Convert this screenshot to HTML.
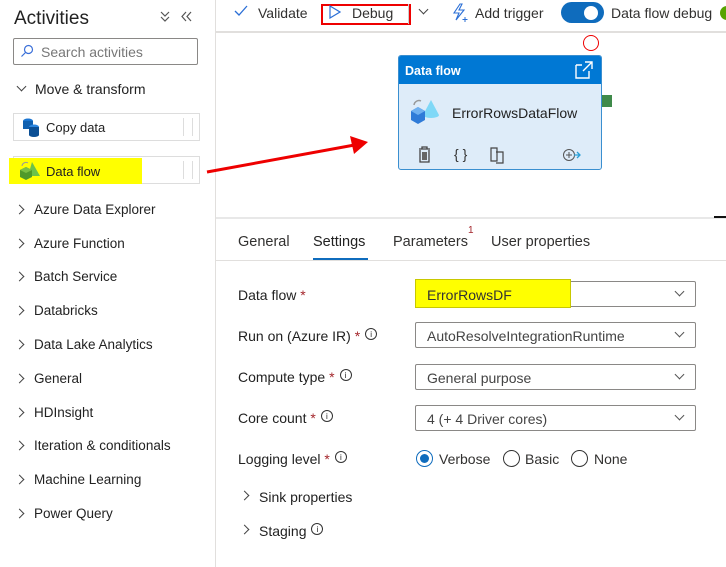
<!DOCTYPE html>
<html><head><meta charset="utf-8"><style>
*{box-sizing:border-box;margin:0;padding:0}
body{width:726px;height:567px;overflow:hidden;background:#fff;font-family:"Liberation Sans",sans-serif;color:#323130;position:relative;font-size:14px}
.a{position:absolute;white-space:nowrap}
.chev{position:absolute;width:7px;height:7px;border-right:1.3px solid #444;border-bottom:1.3px solid #444}
.r{transform:rotate(-45deg)}
.d{transform:rotate(45deg)}
.box{position:absolute;left:415px;width:281px;height:26px;border:1px solid #8a8886;border-radius:2px;font-size:14px;color:#444;padding:5px 0 0 11px}
.box .chev{right:12px;top:6px;transform:rotate(45deg);border-color:#555;width:7px;height:7px}
.info{display:inline-block;width:12px;height:12px;border:1px solid #333;border-radius:50%;font-size:8px;text-align:center;line-height:11px;vertical-align:4px;margin-left:5px}
.lbl{font-size:14px;color:#222}
.star{color:#a4262c}
.rad{position:absolute;width:17px;height:17px;border:1.3px solid #333;border-radius:50%}
</style></head><body>
<!-- sidebar -->
<div class="a" style="left:14px;top:8px;font-size:19px;color:#222">Activities</div>
<svg class="a" style="left:160px;top:10px" width="36" height="14"><path d="M1 2 L5 6 L9 2 M1 7 L5 11 L9 7" stroke="#555" fill="none" stroke-width="1.2"/><path d="M26 2 L22 6.5 L26 11 M31 2 L27 6.5 L31 11" stroke="#555" fill="none" stroke-width="1.2"/></svg>
<div class="a" style="left:13px;top:38px;width:185px;height:27px;border:1px solid #8a8886;border-radius:2px"></div>
<svg class="a" style="left:20px;top:44px" width="14" height="14"><circle cx="8.5" cy="5.5" r="4" fill="none" stroke="#3a6fd8" stroke-width="1.2"/><path d="M5.5 8.5 L1.5 12.5" stroke="#3a6fd8" stroke-width="1.2"/></svg>
<div class="a" style="left:41px;top:44px;font-size:14px;color:#777">Search activities</div>
<div class="chev d" style="left:18px;top:83px"></div>
<div class="a" style="left:35px;top:81px;font-size:14px;color:#222">Move &amp; transform</div>
<div class="a" style="left:13px;top:113px;width:187px;height:28px;border:1px solid #ddd"></div>
<svg class="a" style="left:20px;top:116px" width="22" height="22"><ellipse cx="8" cy="5" rx="5" ry="2.5" fill="#1a75d2"/><rect x="3" y="5" width="10" height="8" fill="#1060b0"/><ellipse cx="14" cy="11" rx="5" ry="2.5" fill="#2b86e0"/><rect x="9" y="11" width="10" height="8" fill="#0b4f95"/><ellipse cx="14" cy="19" rx="5" ry="2" fill="#0b4f95"/></svg>
<div class="a" style="left:46px;top:120px;font-size:13px;color:#222">Copy data</div>
<div class="a" style="left:183px;top:118px;width:10px;height:18px;border-left:1px solid #ddd;border-right:1px solid #ddd"></div>
<div class="a" style="left:13px;top:156px;width:187px;height:28px;border:1px solid #ddd"></div>
<div class="a" style="left:9px;top:158px;width:133px;height:26px;background:#ffff00"></div>
<svg class="a" style="left:18px;top:160px" width="24" height="22"><path d="M14 2 L22 16 L10 16Z" fill="#6cc24a"/><path d="M2 10 L8 7 L14 10 L14 17 L8 20 L2 17Z" fill="#4f9a2a"/><path d="M2 10 L8 13 L14 10 L8 7Z" fill="#7bc043"/><path d="M4 6 A4 4 0 0 1 10 3" stroke="#999" fill="none"/></svg>
<div class="a" style="left:46px;top:164px;font-size:13px;color:#222">Data flow</div>
<div class="a" style="left:183px;top:161px;width:10px;height:18px;border-left:1px solid #ddd;border-right:1px solid #ddd"></div>
<div class="chev r" style="left:16px;top:206px"></div><div class="a lbl" style="left:34px;top:202px;font-size:13.5px">Azure Data Explorer</div>
<div class="chev r" style="left:16px;top:240px"></div><div class="a lbl" style="left:34px;top:236px;font-size:13.5px">Azure Function</div>
<div class="chev r" style="left:16px;top:273px"></div><div class="a lbl" style="left:34px;top:269px;font-size:13.5px">Batch Service</div>
<div class="chev r" style="left:16px;top:307px"></div><div class="a lbl" style="left:34px;top:303px;font-size:13.5px">Databricks</div>
<div class="chev r" style="left:16px;top:341px"></div><div class="a lbl" style="left:34px;top:337px;font-size:13.5px">Data Lake Analytics</div>
<div class="chev r" style="left:16px;top:375px"></div><div class="a lbl" style="left:34px;top:371px;font-size:13.5px">General</div>
<div class="chev r" style="left:16px;top:409px"></div><div class="a lbl" style="left:34px;top:405px;font-size:13.5px">HDInsight</div>
<div class="chev r" style="left:16px;top:442px"></div><div class="a lbl" style="left:34px;top:438px;font-size:13.5px">Iteration &amp; conditionals</div>
<div class="chev r" style="left:16px;top:476px"></div><div class="a lbl" style="left:34px;top:472px;font-size:13.5px">Machine Learning</div>
<div class="chev r" style="left:16px;top:510px"></div><div class="a lbl" style="left:34px;top:506px;font-size:13.5px">Power Query</div>
<div class="a" style="left:215px;top:0;width:1px;height:567px;background:#e1dfdd"></div>
<!-- toolbar -->
<div class="a" style="left:216px;top:31px;width:510px;height:2px;background:#e1dfdd"></div>
<svg class="a" style="left:234px;top:5px" width="14" height="12"><path d="M1 6 L5 10 L13 1" stroke="#2b6fd6" fill="none" stroke-width="1.3"/></svg>
<div class="a" style="left:258px;top:5px;font-size:14px">Validate</div>
<div class="a" style="left:321px;top:4px;width:90px;height:21px;border:2px solid #e00"></div>
<svg class="a" style="left:329px;top:5px" width="12" height="14"><path d="M1 1 L11 7 L1 13Z" stroke="#2b6fd6" fill="none" stroke-width="1.2"/></svg>
<div class="a" style="left:352px;top:5px;font-size:14px">Debug</div>
<div class="a" style="left:408px;top:4px;width:1px;height:20px;background:#ccc"></div>
<div class="chev d" style="left:420px;top:6px"></div>
<svg class="a" style="left:451px;top:3px" width="18" height="20"><path d="M9 1 L3 10 L8 10 L5 17 L13 7 L8 7 L11 1Z" stroke="#2b6fd6" fill="none" stroke-width="1.1"/><path d="M14 14 v5 M11.5 16.5 h5" stroke="#2b6fd6"/></svg>
<div class="a" style="left:475px;top:5px;font-size:14px">Add trigger</div>
<div class="a" style="left:561px;top:2px;width:43px;height:21px;background:#0f6cbd;border-radius:11px"></div>
<div class="a" style="left:584px;top:6px;width:14px;height:14px;background:#fff;border-radius:50%"></div>
<div class="a" style="left:611px;top:5px;font-size:14px">Data flow debug</div>
<div class="a" style="left:720px;top:6px;width:14px;height:14px;background:#57a300;border-radius:50%"></div>
<!-- canvas -->
<div class="a" style="left:583px;top:35px;width:16px;height:16px;border:1.3px solid #e00;border-radius:50%"></div>
<svg class="a" style="left:200px;top:130px" width="180" height="50"><path d="M7 42 L160 14" stroke="#e00" stroke-width="3"/><path d="M168 12 L150 6 L154 24Z" fill="#e00"/></svg>
<div class="a" style="left:398px;top:55px;width:204px;height:115px;border:1px solid #3a8fd0;border-radius:3px;background:#deecf9;overflow:hidden">
<div style="height:28px;background:#0078d4;color:#fff;font-size:12.5px;font-weight:bold;padding:8px 0 0 6px">Data flow</div>
<svg style="position:absolute;left:175px;top:4px" width="20" height="20"><path d="M2 5 V18 H15 V11 M9 11 L18 2 M11 2 H18 V9" stroke="#fff" fill="none" stroke-width="1.4"/><path d="M2 5 H8" stroke="#fff" stroke-width="1.4"/></svg>
<svg style="position:absolute;left:10px;top:39px" width="32" height="34"><path d="M22 5 L30 20 A8 3 0 0 1 14 20Z" fill="#7fd8f7"/><path d="M2 16 L9 12 L16 16 L16 25 L9 29 L2 25Z" fill="#2f7bd8"/><path d="M2 16 L9 20 L16 16 L9 12Z" fill="#6fb0f0"/><path d="M5 10 A5 5 0 0 1 12 6" stroke="#999" fill="none" stroke-width="1.5"/></svg>
<div style="position:absolute;left:53px;top:49px;font-size:14px;color:#222">ErrorRowsDataFlow</div>
<svg style="position:absolute;left:18px;top:90px" width="170" height="18"><path d="M2 3 H13 M5 3 V1 H10 V3 M3 4 V16 H12 V4" stroke="#444" fill="none" stroke-width="1.3"/><rect x="5" y="6" width="5" height="8" fill="#666"/><text x="37" y="13" font-size="14" font-family="Liberation Sans" fill="#333">{ }</text><path d="M74 2 H80 V15 H74Z M79 6 H86 V17 H79" stroke="#444" fill="none" stroke-width="1.2"/><circle cx="152" cy="9" r="5.5" stroke="#555" fill="none"/><path d="M149 9 H155 M152 6 V12" stroke="#555"/><path d="M157 9 H163 M160 6 L163 9 L160 12" stroke="#2a9fd6" fill="none" stroke-width="1.3"/></svg>
</div>
<div class="a" style="left:602px;top:95px;width:10px;height:12px;background:#3f8a4a"></div>
<!-- panel -->
<div class="a" style="left:216px;top:217px;width:510px;height:2px;background:#e8e8e8"></div>
<div class="a" style="left:714px;top:216px;width:12px;height:2px;background:#111"></div>
<div class="a" style="left:238px;top:234px;font-size:14.5px">General</div>
<div class="a" style="left:313px;top:234px;font-size:14.5px;color:#222">Settings</div>
<div class="a" style="left:313px;top:258px;width:55px;height:3px;background:#0f6cbd"></div>
<div class="a" style="left:393px;top:234px;font-size:14.5px">Parameters</div>
<div class="a" style="left:468px;top:225px;font-size:10px;color:#a4262c">1</div>
<div class="a" style="left:491px;top:234px;font-size:14.5px">User properties</div>
<div class="a" style="left:216px;top:260px;width:510px;height:1px;background:#e1dfdd"></div>
<div class="a lbl" style="left:238px;top:287px">Data flow <span class="star">*</span></div>
<div class="box" style="top:281px"><div class="chev"></div></div>
<div class="a" style="left:415px;top:279px;width:156px;height:29px;background:#ffff00;border:1px solid #c8c800"></div>
<div class="a" style="left:427px;top:287px;font-size:14px;color:#333">ErrorRowsDF</div>
<div class="a lbl" style="left:238px;top:328px">Run on (Azure IR) <span class="star">*</span><span class="info">i</span></div>
<div class="box" style="top:322px">AutoResolveIntegrationRuntime<div class="chev"></div></div>
<div class="a lbl" style="left:238px;top:369px">Compute type <span class="star">*</span><span class="info">i</span></div>
<div class="box" style="top:364px">General purpose<div class="chev"></div></div>
<div class="a lbl" style="left:238px;top:410px">Core count <span class="star">*</span><span class="info">i</span></div>
<div class="box" style="top:405px">4 (+ 4 Driver cores)<div class="chev"></div></div>
<div class="a lbl" style="left:238px;top:451px">Logging level <span class="star">*</span><span class="info">i</span></div>
<div class="rad" style="left:416px;top:450px;border-color:#0f6cbd"><div style="margin:3px;width:9px;height:9px;border-radius:50%;background:#0f6cbd"></div></div>
<div class="a" style="left:439px;top:451px;font-size:14px">Verbose</div>
<div class="rad" style="left:503px;top:450px"></div>
<div class="a" style="left:525px;top:451px;font-size:14px">Basic</div>
<div class="rad" style="left:571px;top:450px"></div>
<div class="a" style="left:594px;top:451px;font-size:14px">None</div>
<div class="chev r" style="left:241px;top:492px"></div>
<div class="a lbl" style="left:259px;top:489px">Sink properties</div>
<div class="chev r" style="left:241px;top:526px"></div>
<div class="a lbl" style="left:259px;top:523px">Staging<span class="info">i</span></div>
</body></html>
